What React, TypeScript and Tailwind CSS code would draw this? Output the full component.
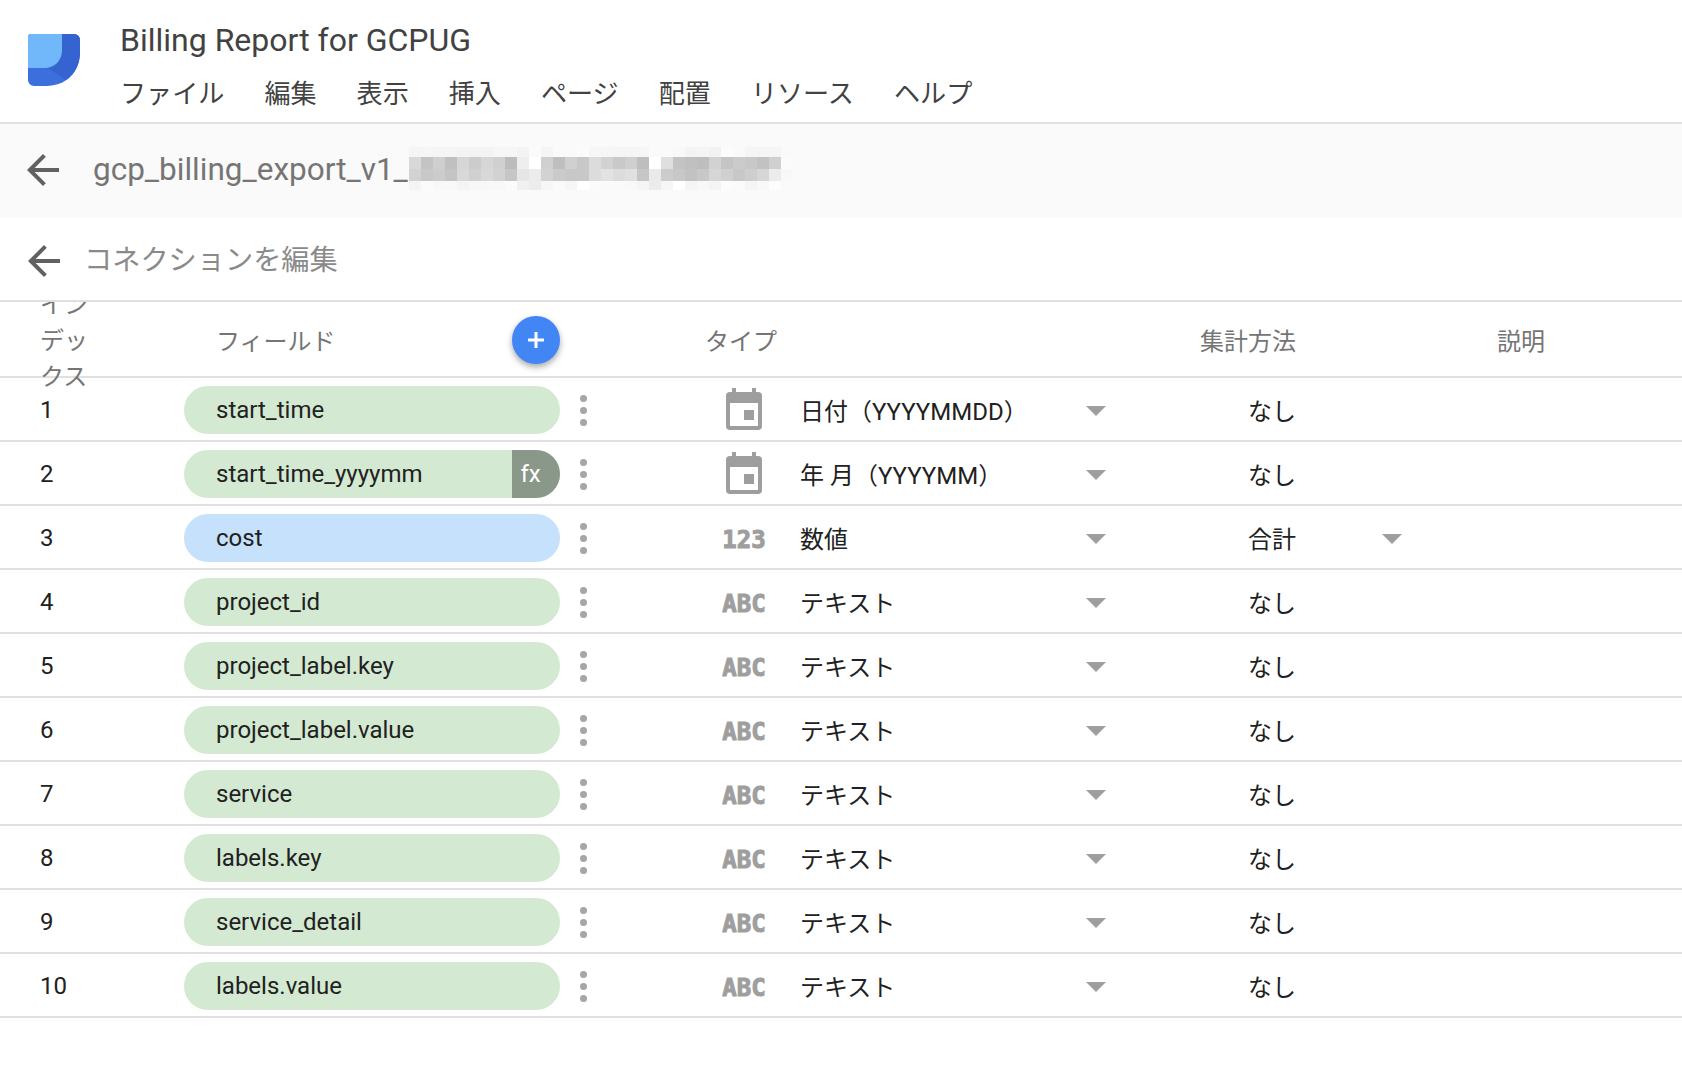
import React from "react";

const menus = ["ファイル", "編集", "表示", "挿入", "ページ", "配置", "リソース", "ヘルプ"];

type Kind = "date" | "num" | "text";

const rows: { name: string; kind: Kind; type: string; agg: string; blue?: boolean; fx?: boolean }[] = [
  { name: "start_time", kind: "date", type: "日付（YYYYMMDD）", agg: "なし" },
  { name: "start_time_yyyymm", kind: "date", type: "年 月（YYYYMM）", agg: "なし", fx: true },
  { name: "cost", kind: "num", type: "数値", agg: "合計", blue: true },
  { name: "project_id", kind: "text", type: "テキスト", agg: "なし" },
  { name: "project_label.key", kind: "text", type: "テキスト", agg: "なし" },
  { name: "project_label.value", kind: "text", type: "テキスト", agg: "なし" },
  { name: "service", kind: "text", type: "テキスト", agg: "なし" },
  { name: "labels.key", kind: "text", type: "テキスト", agg: "なし" },
  { name: "service_detail", kind: "text", type: "テキスト", agg: "なし" },
  { name: "labels.value", kind: "text", type: "テキスト", agg: "なし" },
];

// redacted part of the table name, grey value of each mosaic block
const mosaic = [
  "f5 f6 f5 f5 f3 f3 f3 f6 f6 f3 fb f5 fa fa fb f7 f6 f5 f5 f6 fa fa f8 f3 f5 f2 fc fa f5 f5 f5 fa",
  "d9 c4 cf c0 d6 cc d6 d0 bc ee ff d0 bf d0 c8 dc d2 c9 cf be ff df c3 c0 be d2 c5 cb c8 c2 d0 fb",
  "d2 c8 cc c4 d8 d0 d8 d2 c6 e6 ec d2 ca c8 c8 dc e2 dc e0 c6 ea cc c8 c2 c8 d6 d0 c8 ce d6 ec f8",
  "f4 fb f8 f8 f4 f7 f8 f8 fb f0 ec f6 fa f6 ff fb fa fa f8 f5 ec f6 ff f5 f8 f4 fc fb f5 f8 fd fa",
];
const mosaicY = [0, 10, 22, 34];
const mosaicH = [10, 12, 12, 9];

function Mosaic() {
  return (
    <svg width="384" height="43" viewBox="0 0 384 43" shapeRendering="crispEdges" className="mb-[5px] ml-px shrink-0">
      {mosaic.map((row, r) =>
        row.split(" ").map((g, c) => (
          <rect key={`${r}-${c}`} x={c * 12} y={mosaicY[r]} width="12" height={mosaicH[r]} fill={`#${g}${g}${g}`} />
        ))
      )}
    </svg>
  );
}

function Logo() {
  return (
    <svg width="52" height="52" viewBox="0 0 52 52" className="shrink-0">
      <path d="M3 0H46a6 6 0 0 1 6 6V18C52 38 38 52 18 52H6a6 6 0 0 1-6-6V3a3 3 0 0 1 3-3Z" fill="#3b6fdc" />
      <path d="M34 0H46a6 6 0 0 1 6 6V18C52 30 47 40 38 46L20 34C28 33 34 26 34 18Z" fill="#3563cf" />
      <path d="M3 0H34V16C34 27 26 34 16 34H0V3a3 3 0 0 1 3-3Z" fill="#70b8fa" />
    </svg>
  );
}

function BackArrow({ className }: { className?: string }) {
  return (
    <svg width="48" height="48" viewBox="0 0 24 24" fill="#616161" className={`shrink-0 ${className ?? ""}`}>
      <path d="M20 11H7.830l5.590-5.590L12 4l-8 8 8 8 1.410-1.410L7.830 13H20z" />
    </svg>
  );
}

function CalendarIcon() {
  return (
    <svg width="36" height="42" viewBox="0 0 36 42" fill="#9e9e9e" className="-translate-y-px">
      <rect x="6" y="0" width="4" height="6" />
      <rect x="26" y="0" width="4" height="6" />
      <path d="M4 4H32a4 4 0 0 1 4 4V38a4 4 0 0 1-4 4H4a4 4 0 0 1-4-4V8a4 4 0 0 1 4-4ZM4 15V38H32V15Z" fillRule="evenodd" />
      <rect x="18" y="22" width="10" height="10" />
    </svg>
  );
}

function TypeIcon({ kind }: { kind: Kind }) {
  if (kind === "date") return <CalendarIcon />;
  return (
    <span className="mt-[3px] inline-block font-['DejaVu_Sans_Mono',monospace] text-[24px] font-bold leading-none text-[#9e9e9e] [-webkit-text-stroke:1px_#9e9e9e]">
      {kind === "num" ? "123" : "ABC"}
    </span>
  );
}

function Caret() {
  return <span className="mt-[1px] block h-0 w-0 border-x-[10px] border-t-[10px] border-x-transparent border-t-[#9e9e9e]" />;
}

function Dots() {
  return (
    <div className="flex flex-col items-center gap-[5px]">
      <span className="h-[7px] w-[7px] rounded-full bg-[#a6a6a6]" />
      <span className="h-[7px] w-[7px] rounded-full bg-[#a6a6a6]" />
      <span className="h-[7px] w-[7px] rounded-full bg-[#a6a6a6]" />
    </div>
  );
}

export default function App() {
  return (
    <div className="min-h-[1078px] bg-white font-['Roboto','Noto_Sans_CJK_JP',sans-serif]">
      {/* top bar */}
      <div className="relative z-10 bg-white">
        <div className="flex h-[124px] items-center border-b-2 border-[#e0e0e0] pl-[28px]">
          <div className="-mt-[2px]">
            <Logo />
          </div>
          <div className="ml-[40px] flex flex-col pt-[12px]">
            <div className="text-[32px] leading-[40px] text-[#424242]">Billing Report for GCPUG</div>
            <div className="mt-[14px] flex gap-10 text-[26.1px] leading-[40px] text-[#424242]">
              {menus.map((m) => (
                <span key={m}>{m}</span>
              ))}
            </div>
          </div>
        </div>

        {/* table name */}
        <div className="flex h-[94px] items-center bg-[#fafafa] pl-[19px]">
          <BackArrow className="mb-[2px]" />
          <span className="mb-[3px] ml-[26px] text-[31.5px] leading-[44px] text-[#757575]">gcp_billing_export_v1_</span>
          <Mosaic />
        </div>

        {/* edit connection */}
        <div className="flex h-[84px] items-center border-b-2 border-[#e0e0e0] pl-[20px] pt-[3px]">
          <BackArrow />
          <span className="ml-[16px] text-[28.2px] leading-[40px] text-[#8a8a8a]">コネクションを編集</span>
        </div>
      </div>

      {/* header */}
      <div className="grid h-[76px] grid-cols-[184px_376px_144px_496px_297px_1fr] grid-rows-[74px] items-center border-b-2 border-[#e0e0e0] text-[24px] text-[#757575]">
        <div className="w-[92px] pl-10 pt-[4px] leading-[36px]">インデックス</div>
        <div className="flex items-center justify-between pl-[32px] pt-[2px]">
          <span className="pt-[3px]">フィールド</span>
          <button className="flex h-12 w-12 items-center justify-center rounded-full bg-[#4285f4] shadow-[0_3px_6px_rgba(0,0,0,0.35)]">
            <svg width="16" height="16" viewBox="0 0 16 16" fill="#fff">
              <path d="M6.5 0h3v6.5H16v3H9.500V16h-3V9.500H0v-3h6.500z" />
            </svg>
          </button>
        </div>
        <div />
        <div className="pt-[5px] pl-[1px]">タイプ</div>
        <div className="pt-[5px]">集計方法</div>
        <div className="pt-[5px]">説明</div>
      </div>

      {/* rows */}
      {rows.map((row, i) => (
        <div
          key={row.name}
          className="grid h-[64px] grid-cols-[184px_376px_48px_104px_88px_286px_20px_142px_1fr] items-center border-b-2 border-[#e0e0e0] pt-[2px] text-[24px] text-[#212121]"
        >
          <div className="pl-10">{i + 1}</div>
          <div
            className={`flex h-12 items-center justify-between overflow-hidden rounded-full pl-8 ${
              row.blue ? "bg-[#c5e1fb]" : "bg-[#d4e9d1]"
            }`}
          >
            <span>{row.name}</span>
            {row.fx && (
              <span className="flex h-full w-12 items-center justify-center bg-[#8a9889] pr-[11px] text-white">fx</span>
            )}
          </div>
          <div className="flex justify-center pr-[1px]">
            <Dots />
          </div>
          <div />
          <div className="flex w-16 justify-center">
            <TypeIcon kind={row.kind} />
          </div>
          <div className="pt-[3px]">{row.type}</div>
          <Caret />
          <div />
          <div className="flex items-center">
            <span className="w-[134px] pt-[3px]">{row.agg}</span>
            {row.agg === "合計" && <Caret />}
          </div>
        </div>
      ))}
    </div>
  );
}
